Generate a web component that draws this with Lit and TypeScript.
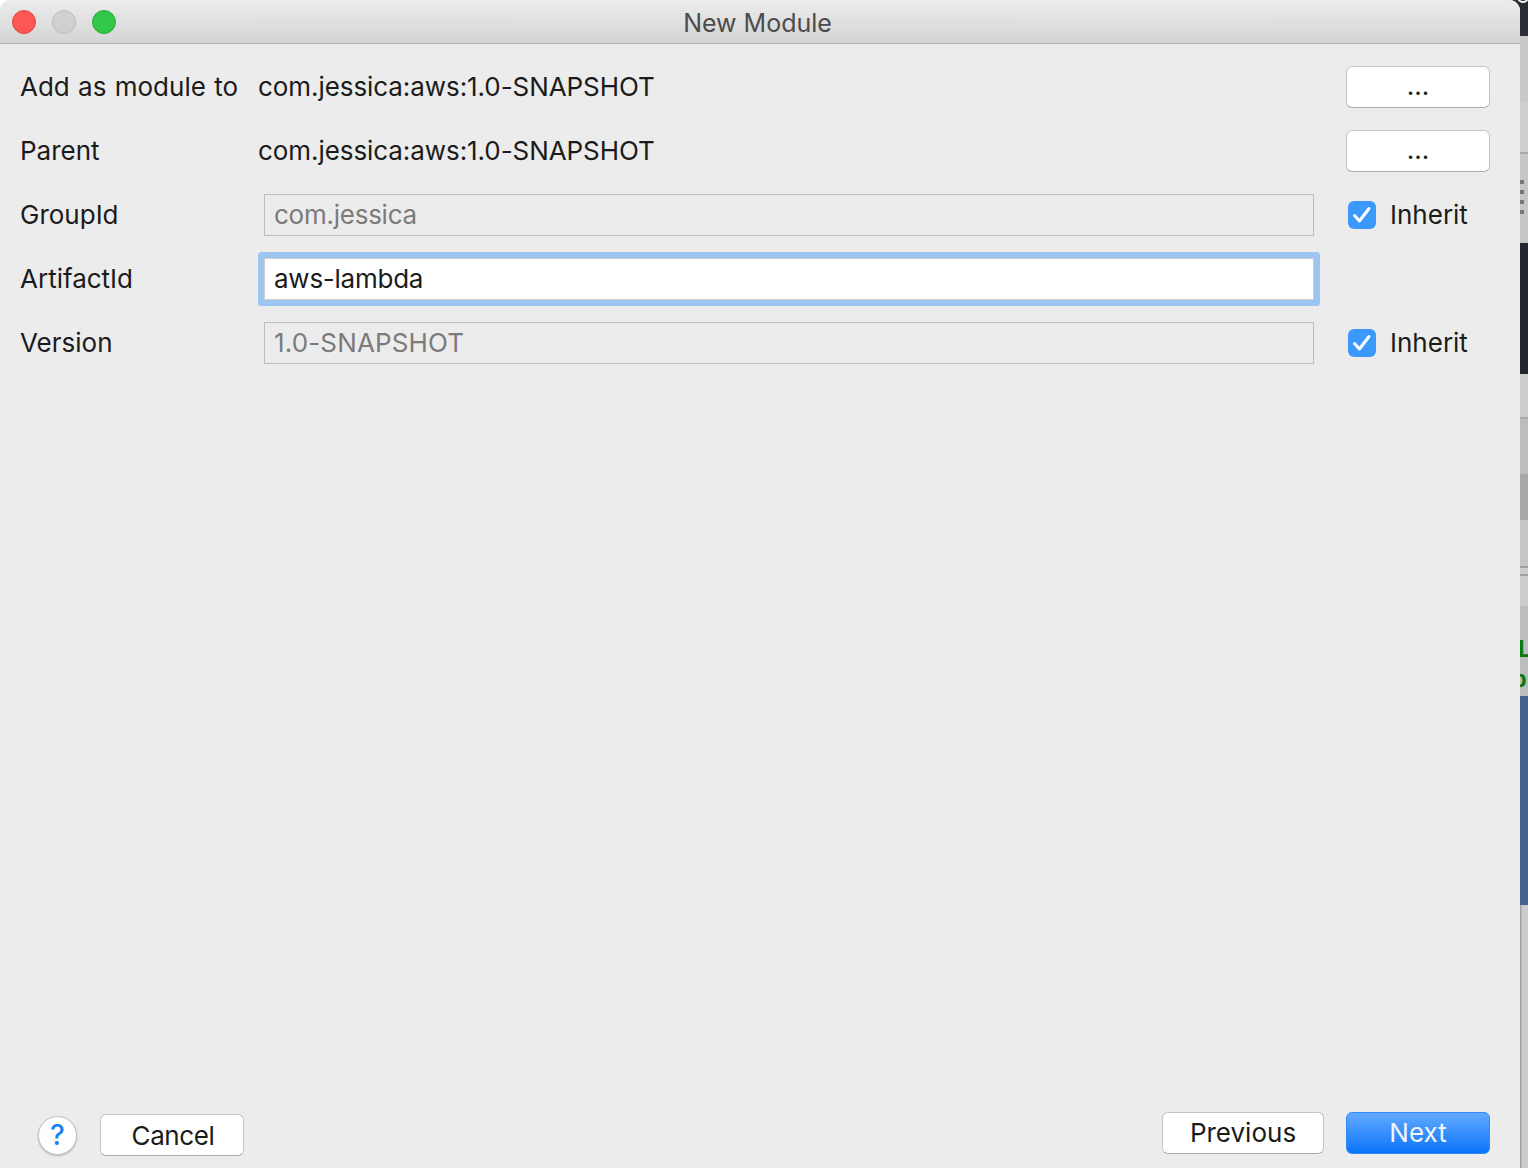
import { LitElement, html, css } from "lit";
import { customElement } from "lit/decorators.js";

// colours and heights of the window peeking out behind the dialog, top to bottom
const STRIP = [
  { h: 36, c: "#2a2d33" },
  { h: 66, c: "#c9c9c9" },
  { h: 50, c: "#cfcfcf" },
  { h: 2, c: "#a9a9a9" },
  { h: 89, c: "#c6c6c6" },
  { h: 131, c: "#22262c" },
  { h: 43, c: "#cccccc" },
  { h: 2, c: "#a9a9a9" },
  { h: 55, c: "#bdbdbd" },
  { h: 46, c: "#a8a8a8" },
  { h: 46, c: "#c6c6c6" },
  { h: 2, c: "#a0a0a0" },
  { h: 6, c: "#cccccc" },
  { h: 2, c: "#a0a0a0" },
  { h: 30, c: "#cdcdcd" },
];

@customElement("app-root")
export class AppRoot extends LitElement {
  static styles = css`
    :host {
      display: block;
    }
    .shell {
      display: flex;
      height: 1168px;
      overflow: hidden;
      font-family: Inter, "Liberation Sans", sans-serif;
      font-size: 26px;
      color: #1b1b1b;
      background: linear-gradient(to right, #fff 50%, #2a2d33 50%);
    }
    .dialog {
      width: 1520px;
      flex: none;
      display: flex;
      flex-direction: column;
      background: #ececec;
      border-radius: 11px 11px 0 0;
      overflow: hidden;
    }
    .titlebar {
      height: 43px;
      flex: none;
      box-sizing: content-box;
      position: relative;
      display: flex;
      align-items: center;
      justify-content: center;
      padding-right: 5px;
      background: linear-gradient(#ececec, #d4d4d4);
      border-bottom: 1px solid #b4b4b4;
      color: #4c4c4c;
      font-size: 25px;
    }
    .title {
      padding-top: 2px;
    }
    .lights {
      position: absolute;
      left: 12px;
      top: 10px;
      display: flex;
      gap: 16px;
    }
    .light {
      width: 24px;
      height: 24px;
      border-radius: 50%;
      box-sizing: border-box;
      border: 1px solid;
    }
    .red {
      background: #fc5753;
      border-color: #df4744;
    }
    .grey {
      background: #d0d0d0;
      border-color: #bcbcbc;
    }
    .green {
      background: #33c748;
      border-color: #27aa35;
    }
    .form {
      display: grid;
      grid-template-columns: 238px 1fr 176px;
      grid-auto-rows: 42px;
      row-gap: 22px;
      padding: 22px 30px 0 20px;
      align-items: center;
    }
    .label {
      white-space: nowrap;
      word-spacing: 1px;
      padding-bottom: 2px;
    }
    .value {
      letter-spacing: -0.07px;
      padding-bottom: 2px;
    }
    .field {
      height: 42px;
      margin-left: 6px;
      box-sizing: border-box;
      display: flex;
      align-items: center;
      padding: 0 0 2px 9px;
      border: 1px solid #bdbdbd;
      color: #7b7b7b;
    }
    .lower {
      letter-spacing: -0.25px;
    }
    .upper {
      letter-spacing: 0.15px;
    }
    .focused {
      background: #fff;
      color: #1b1b1b;
      box-shadow: 0 0 0 6px #9cc5f1;
      border-color: #cfcfcf;
      border-radius: 1px;
    }
    .btn {
      height: 42px;
      box-sizing: border-box;
      display: flex;
      align-items: center;
      justify-content: center;
      background: #fff;
      border: 1px solid #c4c4c4;
      border-bottom-color: #adadad;
      border-radius: 6px;
    }
    .dots {
      margin-left: 32px;
      padding-bottom: 4px;
    }
    .inherit {
      margin-left: 32px;
      display: flex;
      align-items: center;
      gap: 14px;
      padding-left: 2px;
    }
    .inherit span {
      padding-bottom: 2px;
    }
    .check {
      width: 28px;
      height: 28px;
      border-radius: 6px;
      background: #3b99fc;
      display: flex;
      align-items: center;
      justify-content: center;
    }
    .footer {
      margin-top: auto;
      display: flex;
      justify-content: space-between;
      padding: 0 30px 12px 38px;
    }
    .left {
      display: flex;
      align-items: center;
      align-self: flex-end;
      gap: 23px;
    }
    .right {
      display: flex;
      gap: 22px;
      margin-bottom: 2px;
    }
    .help {
      width: 39px;
      height: 39px;
      box-sizing: border-box;
      border-radius: 50%;
      background: #fff;
      border: 1px solid #c4c4c4;
      box-shadow: 0 1px 2px rgba(0, 0, 0, 0.25);
      display: flex;
      align-items: center;
      justify-content: center;
      color: #1a82f7;
      font-weight: 500;
      font-size: 28px;
    }
    .cancel,
    .next {
      width: 144px;
    }
    .cancel {
      letter-spacing: -0.4px;
      padding-left: 2px;
    }
    .previous {
      width: 162px;
      padding-bottom: 2px;
    }
    .next {
      color: #f1f5fb;
      background: linear-gradient(#62aafd, #0b74fb);
      border: 1px solid #2f8cf8;
      padding-bottom: 2px;
    }
    .strip {
      width: 8px;
      flex: none;
      display: flex;
      flex-direction: column;
      position: relative;
      box-shadow: inset 2px 0 2px -1px rgba(0, 0, 0, 0.3);
      background: #cccccc;
    }
    .arc {
      position: absolute;
      left: -5px;
      top: -5px;
    }
    .grip {
      position: absolute;
      left: 0;
      top: 180px;
      display: flex;
      flex-direction: column;
      gap: 6px;
    }
    .grip i {
      display: block;
      width: 4px;
      height: 4px;
      background: #777;
    }
    .code {
      height: 90px;
      flex: none;
      background: #bdbdbd;
      overflow: hidden;
      padding-top: 28px;
      box-sizing: border-box;
      font-family: "Liberation Sans", sans-serif;
      font-weight: 700;
      font-size: 24px;
      line-height: 30px;
      color: #0b7a0b;
    }
    .code-l {
      margin-left: -2px;
    }
    .code-p {
      margin-left: -8px;
    }
    .blue {
      height: 209px;
      flex: none;
      background: #46618f;
    }
  `;

  // a checked "Inherit" box
  private inherit() {
    return html`<div class="inherit">
      <div class="check">
        <svg width="20" height="18" viewBox="0 0 20 18">
          <path d="M2.5 9.5 L7.5 15 L17 2.5" fill="none" stroke="#fff" stroke-width="3" stroke-linecap="round" stroke-linejoin="round" />
        </svg>
      </div>
      <span>Inherit</span>
    </div>`;
  }

  render() {
    return html`<div class="shell">
      <div class="dialog">
        <div class="titlebar">
          <div class="lights">
            <div class="light red"></div>
            <div class="light grey"></div>
            <div class="light green"></div>
          </div>
          <span class="title">New Module</span>
        </div>
        <div class="form">
          <div class="label">Add as module to</div>
          <div class="value">com.jessica:aws:1.0-SNAPSHOT</div>
          <div class="btn dots">...</div>

          <div class="label">Parent</div>
          <div class="value">com.jessica:aws:1.0-SNAPSHOT</div>
          <div class="btn dots">...</div>

          <div class="label">GroupId</div>
          <div class="field lower">com.jessica</div>
          ${this.inherit()}

          <div class="label">ArtifactId</div>
          <div class="field lower focused">aws-lambda</div>
          <div></div>

          <div class="label">Version</div>
          <div class="field upper">1.0-SNAPSHOT</div>
          ${this.inherit()}
        </div>
        <div class="footer">
          <div class="left">
            <div class="help">?</div>
            <div class="btn cancel">Cancel</div>
          </div>
          <div class="right">
            <div class="btn previous">Previous</div>
            <div class="btn next">Next</div>
          </div>
        </div>
      </div>
      <div class="strip">
        ${STRIP.map((s) => html`<div style="height:${s.h}px;flex:none;background:${s.c}"></div>`)}
        <div class="code"><div class="code-l">L</div><div class="code-p">p</div></div>
        <div class="blue"></div>
        <svg class="arc" width="16" height="11" viewBox="0 0 16 11">
          <circle cx="8" cy="2" r="5" fill="none" stroke="#fff" stroke-width="2" />
        </svg>
        <div class="grip"><i></i><i></i><i></i><i></i></div>
      </div>
    </div>`;
  }
}
